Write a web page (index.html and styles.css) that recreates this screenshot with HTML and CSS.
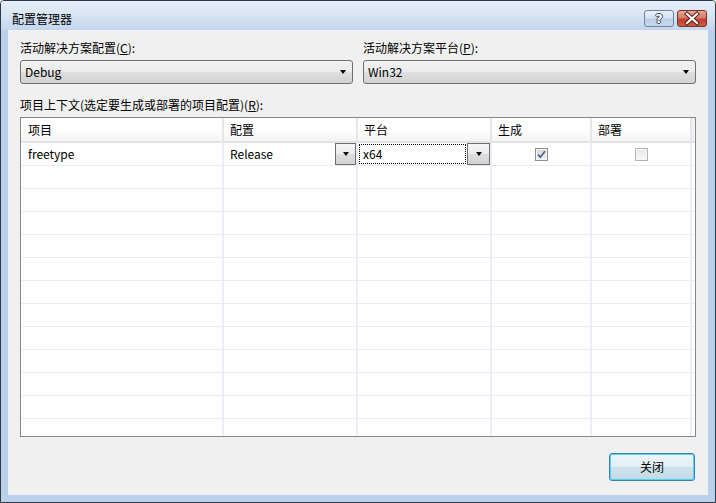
FILE: index.html
```html
<!DOCTYPE html>
<html lang="zh-CN">
<head>
<meta charset="utf-8">
<title>配置管理器</title>
<link rel="stylesheet" href="styles.css">
</head>
<body>
<div class="window">
  <div class="titlebar">
    <span class="title">配置管理器</span>
    <div class="caption-btns">
      <div class="cbtn help"><span class="qmark">?</span></div>
      <div class="cbtn close">
        <svg width="30" height="17" viewBox="0 0 30 17">
          <path d="M10 4 L20 13 M20 4 L10 13" stroke="#5b2018" stroke-width="4.2" stroke-linecap="square" fill="none"/>
          <path d="M10 4 L20 13 M20 4 L10 13" stroke="#ffffff" stroke-width="2.2" stroke-linecap="square" fill="none"/>
        </svg>
      </div>
    </div>
  </div>
  <div class="client">
    <div class="combos">
      <div class="field">
        <div class="label">活动解决方案配置(<u>C</u>):</div>
        <div class="combo"><span class="combo-text">Debug</span><span class="arrow"></span></div>
      </div>
      <div class="field">
        <div class="label">活动解决方案平台(<u>P</u>):</div>
        <div class="combo"><span class="combo-text">Win32</span><span class="arrow"></span></div>
      </div>
    </div>
    <div class="grid-label">项目上下文(选定要生成或部署的项目配置)(<u>R</u>):</div>
    <div class="grid">
      <div class="row header">
        <div class="cell first">项目</div>
        <div class="cell">配置</div>
        <div class="cell">平台</div>
        <div class="cell">生成</div>
        <div class="cell">部署</div>
        <div class="cell filler"></div>
      </div>
      <div class="row">
        <div class="cell first">freetype</div>
        <div class="cell dd-cell"><span class="dd-text">Release</span><span class="dd-btn"><span class="arrow"></span></span></div>
        <div class="cell dd-cell focus-cell"><span class="focus-box">x64</span><span class="dd-btn wide"><span class="arrow"></span></span></div>
        <div class="cell center"><span class="chk checked"><svg width="11" height="11" viewBox="0 0 11 11"><path d="M2 5.5 L4.3 8.3 L9 2.2" stroke="#4b5c8f" stroke-width="1.6" fill="none"/></svg></span></div>
        <div class="cell center"><span class="chk"></span></div>
        <div class="cell filler"></div>
      </div>
      <div class="row"><div class="cell first"></div><div class="cell"></div><div class="cell"></div><div class="cell"></div><div class="cell"></div><div class="cell filler"></div></div>
      <div class="row"><div class="cell first"></div><div class="cell"></div><div class="cell"></div><div class="cell"></div><div class="cell"></div><div class="cell filler"></div></div>
      <div class="row"><div class="cell first"></div><div class="cell"></div><div class="cell"></div><div class="cell"></div><div class="cell"></div><div class="cell filler"></div></div>
      <div class="row"><div class="cell first"></div><div class="cell"></div><div class="cell"></div><div class="cell"></div><div class="cell"></div><div class="cell filler"></div></div>
      <div class="row"><div class="cell first"></div><div class="cell"></div><div class="cell"></div><div class="cell"></div><div class="cell"></div><div class="cell filler"></div></div>
      <div class="row"><div class="cell first"></div><div class="cell"></div><div class="cell"></div><div class="cell"></div><div class="cell"></div><div class="cell filler"></div></div>
      <div class="row"><div class="cell first"></div><div class="cell"></div><div class="cell"></div><div class="cell"></div><div class="cell"></div><div class="cell filler"></div></div>
      <div class="row"><div class="cell first"></div><div class="cell"></div><div class="cell"></div><div class="cell"></div><div class="cell"></div><div class="cell filler"></div></div>
      <div class="row"><div class="cell first"></div><div class="cell"></div><div class="cell"></div><div class="cell"></div><div class="cell"></div><div class="cell filler"></div></div>
      <div class="row"><div class="cell first"></div><div class="cell"></div><div class="cell"></div><div class="cell"></div><div class="cell"></div><div class="cell filler"></div></div>
      <div class="row"><div class="cell first"></div><div class="cell"></div><div class="cell"></div><div class="cell"></div><div class="cell"></div><div class="cell filler"></div></div>
      <div class="row"><div class="cell first"></div><div class="cell"></div><div class="cell"></div><div class="cell"></div><div class="cell"></div><div class="cell filler"></div></div>
    </div>
    <div class="footer">
      <button class="btn">关闭</button>
    </div>
  </div>
</div>
</body>
</html>
```
FILE: styles.css
```css
html, body {
  margin: 0;
  padding: 0;
  background: #ffffff;
}
body {
  font-family: "Noto Sans CJK SC", "Liberation Sans", sans-serif;
  font-size: 12px;
  color: #000;
}
.window {
  width: 716px;
  height: 503px;
  box-sizing: border-box;
  border: 1px solid #303a46;
  border-radius: 4px 4px 0 0;
  background: #b9d1ea;
  display: flex;
  flex-direction: column;
  overflow: hidden;
}
.titlebar {
  height: 29px;
  flex: none;
  display: flex;
  justify-content: space-between;
  align-items: flex-start;
  padding: 0 8px 0 11px;
  background: linear-gradient(#e7eff9 0%, #d3e2f3 60%, #c2d6ee 100%);
}
.title {
  margin-top: 9px;
  line-height: 17px;
  font-size: 12px;
}
.caption-btns {
  display: flex;
  gap: 3px;
  margin-top: 9px;
}
.cbtn {
  width: 30px;
  height: 17px;
  box-sizing: border-box;
  border-radius: 3px;
  display: flex;
  align-items: center;
  justify-content: center;
  overflow: hidden;
}
.help {
  border: 1px solid #6f819c;
  background: linear-gradient(#e9f0f8 0%, #d6e3f1 45%, #bccfe6 55%, #c7d8ec 100%);
}
.qmark {
  font-family: "DejaVu Sans", sans-serif;
  font-weight: bold;
  font-size: 13px;
  line-height: 15px;
  color: #ffffff;
  text-shadow: 1px 0 0 #3b4a60, -1px 0 0 #3b4a60, 0 1px 0 #3b4a60, 0 -1px 0 #3b4a60;
}
.close {
  border: 1px solid #7a3126;
  background: linear-gradient(#e8a898 0%, #d77b6b 45%, #c2402f 55%, #cc5a45 100%);
}
.close svg {
  display: block;
  flex: none;
}
.client {
  flex: 1;
  margin: 0 7px 7px 7px;
  background: #f0f0f0;
  padding: 9px 12px 0 12px;
  display: flex;
  flex-direction: column;
}
.combos {
  display: flex;
  gap: 10px;
}
.field {
  flex: 1;
  min-width: 0;
}
.label, .grid-label {
  line-height: 17px;
  margin-bottom: 4px;
  white-space: nowrap;
}
.grid-label {
  margin-top: 12px;
}
.combo {
  height: 24px;
  box-sizing: border-box;
  border: 1px solid #707070;
  border-radius: 3px;
  background: linear-gradient(#f2f2f2 0%, #ebebeb 50%, #dfdfdf 50%, #d2d2d2 100%);
  display: flex;
  align-items: center;
  padding: 0 6px 0 4px;
}
.combo-text {
  flex: 1;
  line-height: 18px;
}
.arrow {
  width: 0;
  height: 0;
  border-left: 3.5px solid transparent;
  border-right: 3.5px solid transparent;
  border-top: 4px solid #000;
}
.grid {
  height: 320px;
  box-sizing: border-box;
  border: 1px solid #828790;
  background: #ffffff;
  overflow: hidden;
  flex: none;
}
.row {
  display: grid;
  grid-template-columns: 203px 134px 134px 100px 100px 1fr;
  height: 23px;
  box-sizing: border-box;
  border-bottom: 1px solid #ececec;
}
.cell {
  border-right: 2px solid #e9eef7;
  padding-left: 6px;
  line-height: 22px;
  white-space: nowrap;
  overflow: hidden;
}
.cell.first {
  padding-left: 7px;
}
.cell.filler {
  border-right: none;
  padding: 0;
}
.row.header {
  height: 25px;
  border-bottom: 2px solid #e3e3e3;
  background: linear-gradient(#ffffff 0%, #ffffff 45%, #f3f4f6 100%);
}
.row.header .cell {
  line-height: 23px;
  border-right: 2px solid #e6e6e6;
}
.row.header .cell.filler {
  border-right: none;
  background: #f0f1f3;
}
.dd-cell {
  display: flex;
  align-items: stretch;
}
.dd-text {
  flex: 1;
}
.dd-btn {
  width: 21px;
  flex: none;
  box-sizing: border-box;
  border: 1px solid #6f6f6f;
  background: linear-gradient(#f6f6f6 0%, #ececec 50%, #dedede 50%, #d3d3d3 100%);
  display: flex;
  align-items: center;
  justify-content: center;
}
.dd-btn.wide {
  width: 23px;
  margin-left: 1px;
}
.focus-cell {
  padding-left: 1px;
}
.focus-box {
  width: 107px;
  height: 20px;
  margin-top: 1px;
  box-sizing: border-box;
  border: 1px dotted #000;
  padding-left: 3px;
  line-height: 18px;
}
.center {
  display: flex;
  align-items: center;
  justify-content: center;
  padding-left: 0;
}
.chk {
  width: 13px;
  height: 13px;
  box-sizing: border-box;
  border: 1px solid #b4b4b4;
  background: linear-gradient(#e6e6e6, #fafafa);
  box-shadow: inset 0 0 0 1px #f4f4f4;
  display: flex;
  align-items: center;
  justify-content: center;
}
.chk.checked {
  border-color: #8e8f8f;
  background: linear-gradient(#d8d8d8, #f3f3f3);
}
.chk svg {
  display: block;
}
.footer {
  display: flex;
  justify-content: flex-end;
  margin-top: 16px;
  padding-right: 1px;
}
.btn {
  width: 86px;
  height: 28px;
  box-sizing: border-box;
  border: 1px solid #3c7fb1;
  border-radius: 3px;
  box-shadow: inset 0 0 0 1px #4fd2f7;
  background: linear-gradient(#eef5f9 0%, #e2edf3 50%, #cfe2ea 50%, #c3d9e3 100%);
  font-family: "Noto Sans CJK SC", sans-serif;
  font-size: 12px;
  color: #000;
  padding: 0;
  line-height: 18px;
}
```
